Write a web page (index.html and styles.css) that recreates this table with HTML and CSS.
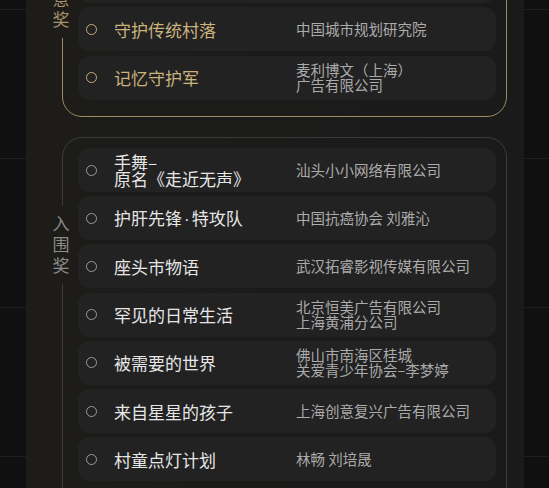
FILE: index.html
```html
<!DOCTYPE html>
<html lang="zh-CN">
<head>
<meta charset="utf-8">
<title>获奖名单</title>
<link rel="stylesheet" href="styles.css">
</head>
<body>
<main class="column">
  <section class="group group--gold">
    <div class="group__label"><span>创</span><span>意</span><span>奖</span></div>
    <ul class="list">
      <li class="item item--ghost"></li>
      <li class="item item--ghost"></li>
      <li class="item"><i class="dot"></i><span class="title">守护传统村落</span><span class="org">中国城市规划研究院</span></li>
      <li class="item"><i class="dot"></i><span class="title">记忆守护军</span><span class="org">麦利博文（上海）<br>广告有限公司</span></li>
    </ul>
  </section>
  <section class="group">
    <div class="group__label"><span>入</span><span>围</span><span>奖</span></div>
    <ul class="list">
      <li class="item"><i class="dot"></i><span class="title">手舞–<br>原名《走近无声》</span><span class="org">汕头小小网络有限公司</span></li>
      <li class="item"><i class="dot"></i><span class="title">护肝先锋<span class="sep">·</span>特攻队</span><span class="org">中国抗癌协会 刘雅沁</span></li>
      <li class="item"><i class="dot"></i><span class="title">座头市物语</span><span class="org">武汉拓睿影视传媒有限公司</span></li>
      <li class="item"><i class="dot"></i><span class="title">罕见的日常生活</span><span class="org">北京恒美广告有限公司<br>上海黄浦分公司</span></li>
      <li class="item"><i class="dot"></i><span class="title">被需要的世界</span><span class="org">佛山市南海区桂城<br>关爱青少年协会–李梦婷</span></li>
      <li class="item"><i class="dot"></i><span class="title">来自星星的孩子</span><span class="org">上海创意复兴广告有限公司</span></li>
      <li class="item"><i class="dot"></i><span class="title">村童点灯计划</span><span class="org">林畅 刘培晟</span></li>
    </ul>
  </section>
</main>
</body>
</html>
```

FILE: styles.css
```css
* { box-sizing: border-box; }

html, body {
  margin: 0;
  height: 100%;
  overflow: hidden;
}

body {
  background-color: #101010;
  background-image: repeating-linear-gradient(to bottom,
    transparent 0, transparent 9px,
    #1e1e1e 9px, #1e1e1e 10px,
    transparent 10px, transparent 149px);
  font-family: "Noto Sans CJK SC", "Noto Sans", sans-serif;
}

.column {
  margin-left: 26px;
  width: 498px;
  min-height: 100%;
  padding: 0 17px 40px 36px;
  background: linear-gradient(90deg, #1d1c19 0%, #1b1b1a 50%, #1a1a1a 100%);
  display: flex;
  flex-direction: column;
  gap: 20px;
}

.group {
  position: relative;
  border: 1px solid #3b3b3b;
  border-radius: 20px;
  padding: 10px 10px 40px 15px;
}

.group--gold {
  margin-top: -100px;
  padding-bottom: 16.5px;
  border-color: #9c8a62;
}

.group__label {
  position: absolute;
  left: -13px;
  top: 68px;
  width: 22px;
  padding: 6px 0 9px;
  display: flex;
  flex-direction: column;
  align-items: center;
  background: #1d1c19;
  color: #8c8c8c;
  font-size: 17px;
  line-height: 21px;
}

.group--gold .group__label {
  top: 59px;
  color: #a8946a;
}

.list {
  list-style: none;
  margin: 0;
  padding: 0;
  display: flex;
  flex-direction: column;
  gap: 4.2px;
}

.item {
  height: 44px;
  border-radius: 12px;
  background: #222222;
  display: flex;
  align-items: center;
  padding-left: 7.5px;
}

.dot {
  flex: none;
  width: 11px;
  height: 11px;
  border-radius: 50%;
  border: 1.6px solid #9a9a9a;
  margin-right: 17.5px;
}

.title {
  flex: none;
  width: 182px;
  font-size: 17px;
  line-height: 17px;
  font-weight: 400;
  color: #e6e6e6;
}

.sep {
  font-family: "Liberation Sans", sans-serif;
  padding: 0 2px;
}

.org {
  font-size: 14.5px;
  line-height: 14.5px;
  color: #ababab;
}

.group--gold .dot { border-color: #c6ae78; }
.group--gold .title { color: #cbb37d; }
```
